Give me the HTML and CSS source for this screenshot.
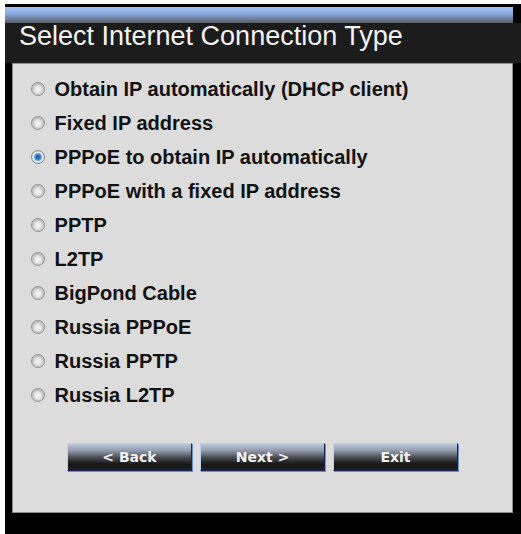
FILE: index.html
```html
<!DOCTYPE html>
<html lang="en">
<head>
    <meta charset="UTF-8">
    <meta name="viewport" content="width=device-width, initial-scale=1.0">
    <title>Select Internet Connection Type</title>
    <link rel="stylesheet" href="styles.css">
</head>
<body>
    <div class="frame">
        <div class="band"></div>
        <h1 class="title">Select Internet Connection Type</h1>
        <form class="panel" id="wanForm">
            <div class="options">
                <label class="option"><input type="radio" name="wan" value="dhcp"> Obtain IP automatically (DHCP client)</label>
                <label class="option"><input type="radio" name="wan" value="fixed"> Fixed IP address</label>
                <label class="option"><input type="radio" name="wan" value="pppoe" checked> PPPoE to obtain IP automatically</label>
                <label class="option"><input type="radio" name="wan" value="pppoe-fixed"> PPPoE with a fixed IP address</label>
                <label class="option"><input type="radio" name="wan" value="pptp"> PPTP</label>
                <label class="option"><input type="radio" name="wan" value="l2tp"> L2TP</label>
                <label class="option"><input type="radio" name="wan" value="bigpond"> BigPond Cable</label>
                <label class="option"><input type="radio" name="wan" value="ru-pppoe"> Russia PPPoE</label>
                <label class="option"><input type="radio" name="wan" value="ru-pptp"> Russia PPTP</label>
                <label class="option"><input type="radio" name="wan" value="ru-l2tp"> Russia L2TP</label>
            </div>
            <div class="buttons">
                <button type="button" class="btn">&lt; Back</button>
                <button type="button" class="btn">Next &gt;</button>
                <button type="button" class="btn">Exit</button>
            </div>
        </form>
    </div>
</body>
</html>
```

FILE: styles.css
```css
body {
    margin: 0;
    padding: 0;
    background-color: white;
    font-family: "Liberation Sans", Arial, sans-serif;
}
.frame {
    margin: 4px 0 0 5px;
    padding-top: 3px;
    height: 527px;
    background-color: #000;
}
.band {
    height: 16px;
    margin-right: 8px;
    background: linear-gradient(#a6c5f4, #84a6da 45%, #5c5f66);
}
.title {
    margin: 0;
    height: 40px;
    padding-left: 14px;
    background-color: #1c1c1c;
    color: #f4f4f4;
    font-size: 27px;
    font-weight: normal;
    line-height: 26px;
}
.panel {
    margin: 0 8px 0 7px;
    height: 448px;
    border: 1px solid #8c8c8c;
    background-color: #dcdcdc;
}
.options {
    padding: 8px 0 0 18px;
}
.option {
    display: flex;
    align-items: center;
    height: 34px;
    font-size: 20px;
    font-weight: bold;
    line-height: 34px;
    color: #111;
    white-space: pre;
}
.option input {
    appearance: none;
    -webkit-appearance: none;
    width: 14px;
    height: 14px;
    margin: 0 4px 0 0;
    border: 1px solid #939393;
    border-radius: 50%;
    background: radial-gradient(circle at 50% 55%, #f6f6f6 0, #e6e6e6 3px, #cacaca 5px, #b8b8b8 7px);
}
.option input:checked {
    border-color: #7d8c9c;
    background: radial-gradient(circle, #154f8c 0, #2f78c2 2px, #5ea3e2 3.5px, #f2f5f8 4.5px, #dedede 5.5px, #bdbdbd 7px);
}
.buttons {
    display: flex;
    justify-content: center;
    gap: 8px;
    margin-top: 31px;
}
.btn {
    width: 125px;
    height: 28px;
    padding: 0;
    border: 1px solid;
    border-color: #b6d1f6 #1a2356 #1a2356 #b6d1f6;
    box-shadow: 1px 1px 0 #6d8ed2;
    background: linear-gradient(#bcc7da, #939cae 25%, #4a4c52 52%, #161616 78%, #1e1e1e);
    color: #f2f2f2;
    font-family: "DejaVu Sans", Verdana, sans-serif;
    font-size: 14px;
    font-weight: bold;
    cursor: pointer;
}
```
